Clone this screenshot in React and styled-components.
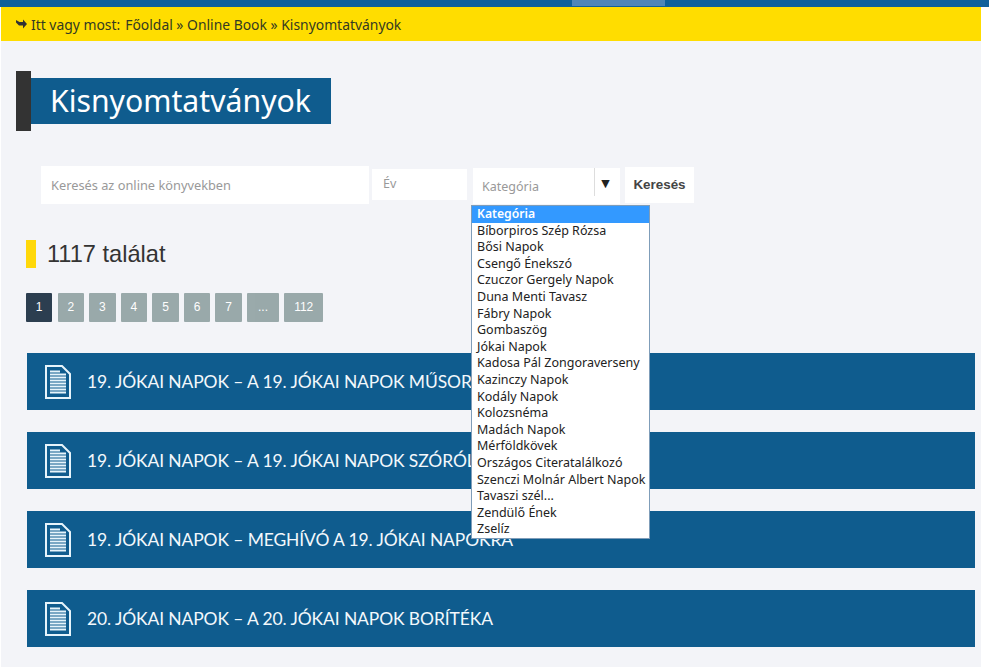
import React from "react";
import styled, { createGlobalStyle } from "styled-components";

const Global = createGlobalStyle`
  html, body { margin: 0; padding: 0; background: #fff; }
  body { width: 989px; height: 667px; overflow: hidden; font-family: "Noto Sans", sans-serif; }
`;
const TopBar = styled.div`
  height: 7px; background: #10609a; padding-left: 572px; box-sizing: border-box;
`;
const TopTab = styled.div`
  width: 93px; height: 6px; background: #4f86b8;
`;
const Panel = styled.main`
  width: 980px; margin-left: 1px; height: 660px; background: #f3f4f8; position: relative; overflow: hidden;
`;
const Crumbs = styled.div`
  height: 34px; background: #ffdd00; display: flex; align-items: center; padding-left: 15px; box-sizing: border-box;
  font-size: 13.9px; color: #333a22; gap: 5px; white-space: nowrap;
`;
const CrumbIcon = styled.svg`
  margin-right: -1px;
`;
const TitleRow = styled.div`
  display: flex; align-items: center; margin: 30px 0 0 15px; height: 60px;
`;
const TitleMark = styled.div`
  width: 15px; height: 60px; background: #333;
`;
const Title = styled.h1`
  margin: 0; width: 300px; height: 46px; box-sizing: border-box; padding-left: 19px; background: #0f5c8e; color: #fff;
  font-size: 30.2px; font-weight: 400; line-height: 45px; white-space: nowrap;
`;
const SearchRow = styled.form`
  display: flex; align-items: flex-start; margin: 35px 0 0 40px; height: 38px;
`;
const SearchInput = styled.div`
  width: 328px; height: 38px; background: #fff; box-sizing: border-box; padding-left: 10px; margin-right: 3px;
  font: 12.8px/39px "Noto Sans", sans-serif; color: #999;
`;
const YearInput = styled.div`
  width: 95px; height: 31px; margin: 3px 6px 0 0; background: #fff; box-sizing: border-box; padding-left: 11px;
  font: 12.5px/30px "Noto Sans", sans-serif; color: #999;
`;
const SelectBox = styled.div`
  width: 147px; height: 36px; margin: 2px 5px 0 0; background: #fff; box-sizing: border-box; padding-left: 9px;
  display: flex; justify-content: space-between;
  font: 12.5px/37px "Noto Sans", sans-serif; color: #999;
`;
const Arrow = styled.span`
  width: 26px; height: 28px; border-left: 1px solid #ddd; color: #222; font-size: 11px; line-height: 31px; text-align: center; padding-right: 4px; box-sizing: border-box;
  font-family: "DejaVu Sans", sans-serif;
`;
const SearchButton = styled.div`
  width: 69px; height: 36px; margin-top: 1px; background: #fff; text-align: center;
  font: 700 13.4px/35px "Liberation Sans", Arial, sans-serif; color: #444;
`;
const ResultsRow = styled.div`
  display: flex; align-items: center; margin: 36px 0 0 25px; height: 28px; gap: 11px;
`;
const ResultsMark = styled.div`
  width: 10px; height: 28px; background: #ffd80a;
`;
const ResultsText = styled.h2`
  margin: 0; font: 400 23.6px/28px "Liberation Sans", Arial, sans-serif; color: #333;
`;
const Pager = styled.nav`
  display: flex; gap: 5.2px; margin: 25px 0 0 25px;
`;
const Page = styled.a`
  width: ${p => p.$w}px; height: 29px; border-radius: 1px; text-align: center;
  background: ${p => (p.$active ? "#2c3e50" : "#95a5a6")}; color: #fff; opacity: ${p => (p.$active ? 1 : 0.95)};
  font: 12px/29px "Liberation Sans", Arial, sans-serif;
`;
const List = styled.div`
  display: flex; flex-direction: column; gap: 22px; margin: 31px 0 0 26px; width: 948px;
`;
const Row = styled.a`
  height: 57px; background: #0f5c8e; display: flex; align-items: center; padding-left: 18px; gap: 16px; box-sizing: border-box;
  color: #f3f8fc; font: 400 17.45px/1 Lato, sans-serif; white-space: nowrap; letter-spacing: -0.1px;
`;
const Dropdown = styled.ul`
  position: absolute; left: 470px; top: 198px; width: 179px; height: 334px; box-sizing: border-box; margin: 0; padding: 0;
  list-style: none; background: #fff; border: 1px solid #7f9db9;
  font-size: 12.5px; color: #222;
`;
const Option = styled.li`
  height: 16.6px; line-height: 16.6px; padding-left: 5px; white-space: nowrap;
  background: ${p => (p.$selected ? "#3399ff" : "transparent")};
  color: ${p => (p.$selected ? "#fff" : "inherit")};
  font-weight: ${p => (p.$selected ? 600 : 400)};
  font-size: ${p => (p.$selected ? "12.2px" : "inherit")};
`;

const DocIcon = () => (
  <svg width="26" height="34" viewBox="0 0 26 34" fill="none">
    <path d="M1 1H17L25 9V33H1Z" stroke="#e6f4fb" strokeWidth="2" fill="#0f5c8e" />
    <path d="M5 6.5H15M5 9.5H21M5 12.5H21M5 15.5H21M5 18.5H21M5 21.5H21M5 24.5H21M5 27.5H21" stroke="#e6f4fb" strokeWidth="1.8" />
  </svg>
);
const ArrowIcon = () => (
  <CrumbIcon width="11" height="10" viewBox="0 0 11 10">
    <path d="M0 1 L3.5 3 H7 V0.5 L11 5 L7 9.5 V6.5 H3 L0 3.5Z" fill="#333" />
  </CrumbIcon>
);

const pages = [["1", 26.4, true], ["2", 26.4], ["3", 26.4], ["4", 26.4], ["5", 26.4], ["6", 26.4], ["7", 26.4], ["...", 32], ["112", 39]];
const rows = [
  "19. JÓKAI NAPOK – A 19. JÓKAI NAPOK MŰSORFÜZETE",
  "19. JÓKAI NAPOK – A 19. JÓKAI NAPOK SZÓRÓLAPJA",
  "19. JÓKAI NAPOK – MEGHÍVÓ A 19. JÓKAI NAPOKRA",
  "20. JÓKAI NAPOK – A 20. JÓKAI NAPOK BORÍTÉKA",
];
const options = ["Kategória", "Bíborpiros Szép Rózsa", "Bősi Napok", "Csengő Énekszó", "Czuczor Gergely Napok", "Duna Menti Tavasz", "Fábry Napok", "Gombaszög", "Jókai Napok", "Kadosa Pál Zongoraverseny", "Kazinczy Napok", "Kodály Napok", "Kolozsnéma", "Madách Napok", "Mérföldkövek", "Országos Citeratalálkozó", "Szenczi Molnár Albert Napok", "Tavaszi szél...", "Zendülő Ének", "Zselíz"];

export default function App() {
  return (
    <>
      <Global />
      <TopBar><TopTab /></TopBar>
      <Panel>
        <Crumbs>
          <ArrowIcon />
          <span>Itt vagy most:</span>
          <span>Főoldal » Online Book » Kisnyomtatványok</span>
        </Crumbs>
        <TitleRow>
          <TitleMark />
          <Title>Kisnyomtatványok</Title>
        </TitleRow>
        <SearchRow>
          <SearchInput>Keresés az online könyvekben</SearchInput>
          <YearInput>Év</YearInput>
          <SelectBox>
            <span>Kategória</span>
            <Arrow>▼</Arrow>
          </SelectBox>
          <SearchButton>Keresés</SearchButton>
        </SearchRow>
        <ResultsRow>
          <ResultsMark />
          <ResultsText>1117 találat</ResultsText>
        </ResultsRow>
        <Pager>
          {pages.map(([t, w, a]) => (
            <Page key={t} $w={w} $active={a}>{t}</Page>
          ))}
        </Pager>
        <List>
          {rows.map(r => (
            <Row key={r}><DocIcon /><span>{r}</span></Row>
          ))}
        </List>
        <Dropdown>
          {options.map((o, i) => (
            <Option key={o} $selected={i === 0}>{o}</Option>
          ))}
        </Dropdown>
      </Panel>
    </>
  );
}
